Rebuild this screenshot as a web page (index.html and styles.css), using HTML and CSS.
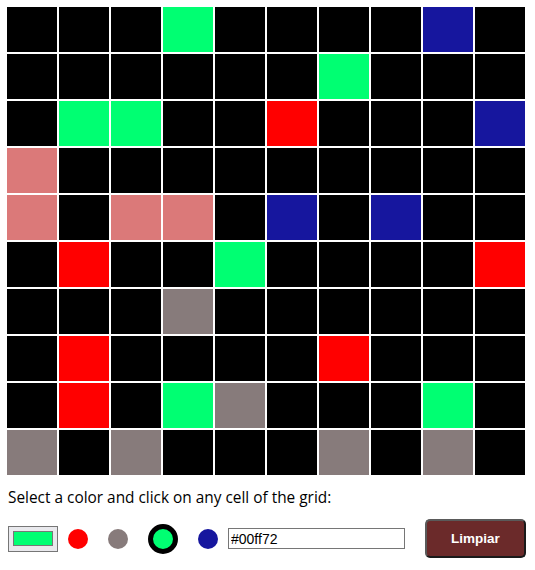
FILE: index.html
```html
<!DOCTYPE html>
<html>
<head>
<meta charset="utf-8">
<link rel="stylesheet" href="styles.css">
</head>
<body>
<div class="grid">
  <div class="c"></div><div class="c"></div><div class="c"></div><div class="c g"></div><div class="c"></div><div class="c"></div><div class="c"></div><div class="c"></div><div class="c u"></div><div class="c"></div>
  <div class="c"></div><div class="c"></div><div class="c"></div><div class="c"></div><div class="c"></div><div class="c"></div><div class="c g"></div><div class="c"></div><div class="c"></div><div class="c"></div>
  <div class="c"></div><div class="c g"></div><div class="c g"></div><div class="c"></div><div class="c"></div><div class="c r"></div><div class="c"></div><div class="c"></div><div class="c"></div><div class="c u"></div>
  <div class="c p"></div><div class="c"></div><div class="c"></div><div class="c"></div><div class="c"></div><div class="c"></div><div class="c"></div><div class="c"></div><div class="c"></div><div class="c"></div>
  <div class="c p"></div><div class="c"></div><div class="c p"></div><div class="c p"></div><div class="c"></div><div class="c u"></div><div class="c"></div><div class="c u"></div><div class="c"></div><div class="c"></div>
  <div class="c"></div><div class="c r"></div><div class="c"></div><div class="c"></div><div class="c g"></div><div class="c"></div><div class="c"></div><div class="c"></div><div class="c"></div><div class="c r"></div>
  <div class="c"></div><div class="c"></div><div class="c"></div><div class="c y"></div><div class="c"></div><div class="c"></div><div class="c"></div><div class="c"></div><div class="c"></div><div class="c"></div>
  <div class="c"></div><div class="c r"></div><div class="c"></div><div class="c"></div><div class="c"></div><div class="c"></div><div class="c r"></div><div class="c"></div><div class="c"></div><div class="c"></div>
  <div class="c"></div><div class="c r"></div><div class="c"></div><div class="c g"></div><div class="c y"></div><div class="c"></div><div class="c"></div><div class="c"></div><div class="c g"></div><div class="c"></div>
  <div class="c y"></div><div class="c"></div><div class="c y"></div><div class="c"></div><div class="c"></div><div class="c"></div><div class="c y"></div><div class="c"></div><div class="c y"></div><div class="c"></div>
</div>
<p class="hint">Select a color and click on any cell of the grid:</p>
<div class="controls">
  <div class="picker"><span class="swatch"></span></div>
  <span class="dot r"></span>
  <span class="dot y"></span>
  <span class="dot g sel"></span>
  <span class="dot u"></span>
  <input class="hex" type="text" value="#00ff72">
  <button class="clear">Limpiar</button>
</div>
</body>
</html>
```

FILE: styles.css
```css
html, body {
  margin: 0;
  padding: 0;
  background: #ffffff;
}
body {
  font-family: "Open Sans", "Noto Sans", sans-serif;
}
.grid {
  display: grid;
  grid-template-columns: repeat(10, 50px);
  grid-auto-rows: 45px;
  gap: 2px;
  padding: 7px 0 0 7px;
}
.c { background: #000000; }
.g { background: #00ff72; }
.u { background: #16169e; }
.r { background: #ff0000; }
.p { background: #db7979; }
.y { background: #877b7b; }

.hint {
  margin: 12px 0 0 8px;
  font-size: 15.4px;
  line-height: 21px;
  color: #000;
}
.controls {
  display: flex;
  align-items: center;
  margin: 11px 0 0 8px;
  height: 39px;
}
.picker {
  width: 50px;
  height: 26px;
  box-sizing: border-box;
  border: 1px solid #767676;
  background: #e9e9ed;
  display: flex;
  align-items: center;
  justify-content: center;
}
.swatch {
  width: 40px;
  height: 15px;
  box-sizing: border-box;
  border: 1px solid #777777;
  background: #00ff72;
}
.dot {
  width: 20px;
  height: 20px;
  border-radius: 50%;
  margin: 0 10px;
}
.dot.sel {
  width: 30px;
  height: 30px;
  box-sizing: border-box;
  border: 5px solid #000000;
}
.hex {
  width: 177px;
  height: 21px;
  box-sizing: border-box;
  border: 1px solid #767676;
  padding: 1px 2px;
  font-family: "Liberation Sans", Arial, sans-serif;
  font-size: 14px;
  margin: 0;
}
.clear {
  margin-left: 20px;
  width: 101px;
  height: 39px;
  box-sizing: border-box;
  background: #6b2a2a;
  color: #ffffff;
  font-family: "Liberation Sans", Arial, sans-serif;
  font-weight: bold;
  font-size: 13.5px;
  border: 2px solid;
  border-color: #5a5a5a #1a1a1a #1a1a1a #5a5a5a;
  border-radius: 5px;
  padding: 0;
}
```
